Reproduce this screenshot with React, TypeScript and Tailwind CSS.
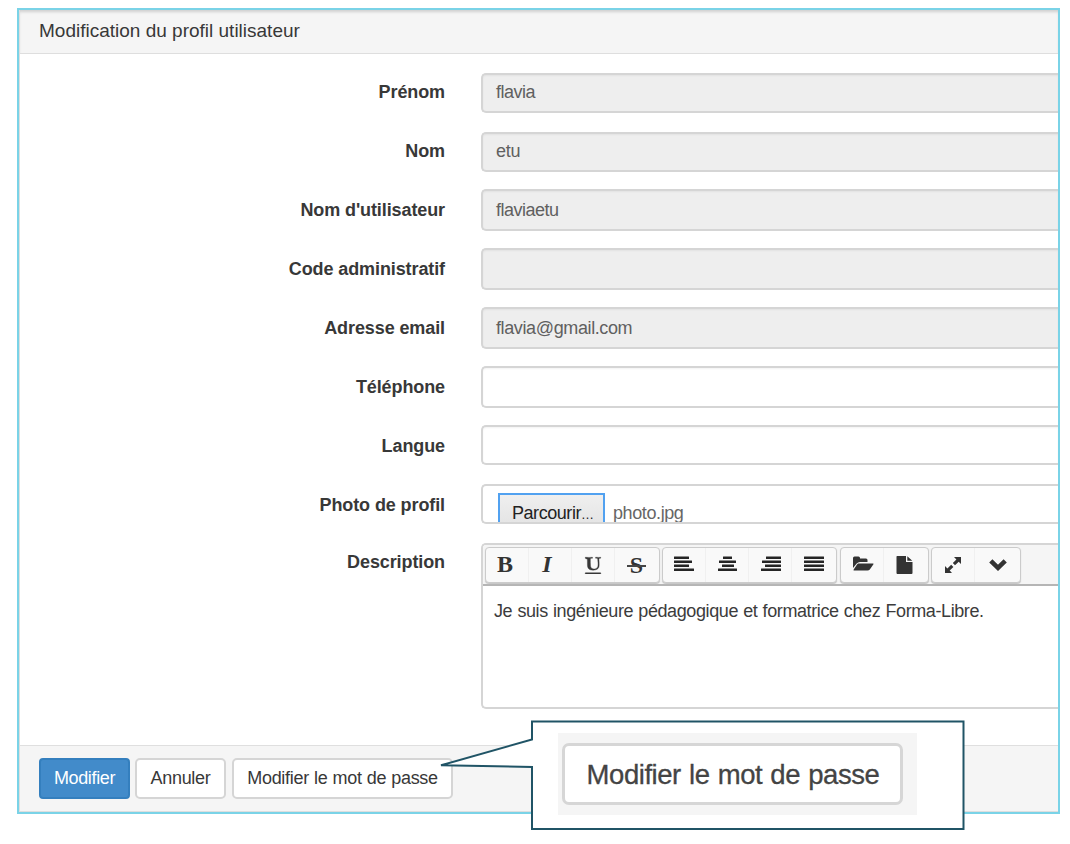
import React from 'react';

type Field = { label: string; value?: string; disabled?: boolean; gap: string; height: string; labelPad: string; spacing?: string };

const fields: Field[] = [
  { label: 'Prénom', value: 'flavia', disabled: true, gap: 'mt-[19px]', height: 'h-[40px]', labelPad: 'pt-[8px]', spacing: 'pt-[6px] tracking-[-0.5px]' },
  { label: 'Nom', value: 'etu', disabled: true, gap: 'mt-[19px]', height: 'h-[40px]', labelPad: 'pt-[8px]', spacing: 'pt-[6px] tracking-[-0.2px]' },
  { label: "Nom d'utilisateur", value: 'flaviaetu', disabled: true, gap: 'mt-[17px]', height: 'h-[42px]', labelPad: 'pt-[10px]', spacing: 'pt-[8px] tracking-[-0.5px]' },
  { label: 'Code administratif', disabled: true, gap: 'mt-[17px]', height: 'h-[42px]', labelPad: 'pt-[10px]' },
  { label: 'Adresse email', value: 'flavia@gmail.com', disabled: true, gap: 'mt-[17px]', height: 'h-[42px]', labelPad: 'pt-[10px]', spacing: 'pt-[8px] tracking-[-0.38px]' },
  { label: 'Téléphone', gap: 'mt-[17px]', height: 'h-[42px]', labelPad: 'pt-[10px]' },
  { label: 'Langue', gap: 'mt-[17px]', height: 'h-[40px]', labelPad: 'pt-[10px]' },
];

const fieldBorder = 'rounded-l-[5px] border-2 border-r-0 border-[#d5d5d5]';

function Label({ children, className }: { children: React.ReactNode; className: string }) {
  return (
    <div className={`mr-[36px] w-[425px] shrink-0 whitespace-nowrap text-right text-[18px] leading-[22px] font-bold tracking-[-0.1px] text-[#383838] ${className}`}>
      {children}
    </div>
  );
}

function Lines({ rows }: { rows: number[][] }) {
  return (
    <svg width="20" height="16" viewBox="0 0 20 16" fill="#252525" className="relative -top-px">
      {rows.map(([x, w], i) => (
        <rect key={i} x={x} y={i * 4 + 0.5} width={w} height="2.6" rx="0.3" />
      ))}
    </svg>
  );
}

function ToolGroup({ children, className }: { children: React.ReactNode; className: string }) {
  return (
    <div className={`flex h-[36px] shrink-0 rounded-[4px] border border-[#cbcbcb] bg-[#f9f9f9] shadow-[0_1px_1px_#c4c4c4] ${className}`}>
      {children}
    </div>
  );
}

function Tool({ children, className = '' }: { children: React.ReactNode; className?: string }) {
  return (
    <div className={`flex w-[43px] items-center justify-center border-r border-[#f0f0f0] text-[#333] last:border-r-0 ${className}`}>
      {children}
    </div>
  );
}

const glyph = 'block font-["Liberation_Serif",serif] text-[24px] leading-[24px] font-bold';

export default function App() {
  return (
    <div className='relative h-[844px] w-[1070px] overflow-hidden bg-white pt-[8px] pl-[17px] font-["Liberation_Sans",Arial,sans-serif]'>
      <div className="flex h-[806px] w-[1043px] flex-col overflow-hidden border-2 border-[#7ad3e7] bg-white">
        <div className="flex min-h-0 flex-1 flex-col border-l border-b border-[#dedede]">
          <header className="h-[44px] shrink-0 border-b-[1.5px] border-[#dedede] bg-[#f5f5f5] pt-[10px] pl-[19px] text-[19px] leading-[22px] text-[#383838] shadow-[inset_0_3px_3px_-1px_#d0d0d0]">
            Modification du profil utilisateur
          </header>
          <main className="flex flex-1 flex-col">
            {fields.map((f) => (
              <div key={f.label} className={`flex ${f.gap} ${f.height}`}>
                <Label className={f.labelPad}>{f.label}</Label>
                <div
                  className={`flex-1 ${fieldBorder} ${f.disabled ? 'bg-[#eeeeee]' : 'bg-white'} pl-[13px] text-[18px] leading-[22px] text-[#606060] shadow-[inset_0_1px_2px_#0000000d] ${f.spacing ?? ''}`}
                >
                  {f.value}
                </div>
              </div>
            ))}
            <div className="mt-[19px] flex h-[40px]">
              <Label className="pt-[10px]">Photo de profil</Label>
              <div className={`flex flex-1 overflow-hidden ${fieldBorder} bg-white pl-[15px]`}>
                <div className="mt-[7px] h-[40px] w-[107px] shrink-0 border-2 border-[#51a1f0] bg-linear-to-b from-[#efefef] to-[#e2e2e2] pt-[7px] pl-[12px] text-[18px] leading-[22px] tracking-[-0.45px] whitespace-nowrap text-[#222]">
                  Parcourir<span className="text-[13px]">…</span>
                </div>
                <div className="pt-[16px] pl-[8px] text-[18px] leading-[22px] tracking-[-0.4px] text-[#666]">photo.jpg</div>
              </div>
            </div>
            <div className="mt-[19px] flex h-[166px]">
              <Label className="pt-[8px]">Description</Label>
              <div className={`flex flex-1 flex-col overflow-hidden ${fieldBorder} bg-white`}>
                <div className="flex h-[41px] shrink-0 border-b-2 border-[#b5b5b5] bg-[#f5f5f5] pt-[2px] pl-[2px]">
                  <ToolGroup className="w-[175px]">
                    <Tool className="pr-[4px] pb-[2px]"><span className={glyph}>B</span></Tool>
                    <Tool className="pr-[6px] pb-[2px]"><span className={`${glyph} italic`}>I</span></Tool>
                    <Tool>
                      <svg width="18" height="18" viewBox="0 0 1792 1792" fill="#383838" stroke="#383838" strokeWidth="40">
                        <path d="M176 223q-37-2-45-4l-3-88q13-1 40-1 60 0 112 4 132 7 166 7 86 0 168-3 116-4 146-5 56 0 86-2l-1 14 2 64v9q-60 9-124 9-60 0-79 25-13 14-13 132 0 13 .5 32.5t.5 25.5l1 229 14 280q6 124 51 202 35 59 96 92 88 47 177 47 104 0 191-28 56-18 99-51 48-36 65-64 36-56 53-114 21-73 21-229 0-79-3.5-128t-11-122.5-13.5-159.5l-4-59q-5-67-24-88-34-35-77-34l-100 2-14-3 2-86h84l205 10q76 3 196-10l18 2q6 38 6 51 0 7-4 31-45 12-84 13-73 11-79 17-15 15-15 41 0 7 1.500 27t1.500 31q8 19 22 396 6 195-15 304-15 76-41 122-38 65-112 123-75 57-182 89-109 33-255 33-167 0-284-46-119-47-179-122-61-76-83-195-16-80-16-237V524q0-188-17-213-25-36-147-39zM1664 1760v-64q0-14-9-23t-23-9H160q-14 0-23 9t-9 23v64q0 14 9 23t23 9h1472q14 0 23-9t9-23z" />
                      </svg>
                    </Tool>
                    <Tool className="pb-[1px]">
                      <span className="relative">
                        <span className={`${glyph}`}>S</span>
                        <span className="absolute top-[12px] left-[-3px] h-[2px] w-[19px] bg-[#454545]" />
                      </span>
                    </Tool>
                  </ToolGroup>
                  <ToolGroup className="ml-[2px] w-[175px]">
                    <Tool><Lines rows={[[0, 15], [0, 18], [0, 15], [0, 20]]} /></Tool>
                    <Tool className="pl-[2px]"><Lines rows={[[5, 9], [1, 17], [4, 12], [0, 19]]} /></Tool>
                    <Tool className="pl-[2px]"><Lines rows={[[5, 15], [1, 19], [4, 16], [0, 20]]} /></Tool>
                    <Tool className="pl-[1px]"><Lines rows={[[0, 20], [0, 20], [0, 20], [0, 20]]} /></Tool>
                  </ToolGroup>
                  <ToolGroup className="ml-[3px] w-[89px]">
                    <Tool className="pl-[2px] pb-[2px]">
                      <svg width="21" height="16" viewBox="0 0 21 16" fill="#333">
                        <path d="M0 12V2Q0 .5 1.500 .5H5.500Q7 .5 7 2V2.500H13Q14.500 2.500 14.500 4V6H7Q5 6 3.700 7.500ZM5 7.500H20Q21 7.500 20.300 8.500L16.800 13.500Q16 14.500 14.500 14.500H1Q0 14.500 .7 13.500L4 8.500Z" />
                      </svg>
                    </Tool>
                    <Tool className="pr-[3px] pb-[1px]">
                      <svg width="17" height="20" viewBox="0 0 17 20" fill="#333">
                        <path d="M1 1H10V7H16.500V18Q16.500 19 15.500 19H1.500Q.5 19 .5 18V1.500ZM11.300 1.200L16.300 5.800H11.300Z" />
                      </svg>
                    </Tool>
                  </ToolGroup>
                  <ToolGroup className="ml-[2px] w-[90px]">
                    <Tool className="pb-[1px]">
                      <svg width="18" height="18" viewBox="0 0 18 18" fill="#333">
                        <path d="M10 1H17V8L14.700 5.700L11 9.300L8.800 7.100L12.400 3.400ZM7.200 8.700L9.400 10.900L5.700 14.600L8 17H1V10L3.400 12.400Z" />
                      </svg>
                    </Tool>
                    <Tool className="pl-[2px]">
                      <svg width="18" height="12" viewBox="0 0 18 12" fill="none" stroke="#333" strokeWidth="4.600">
                        <path d="M1.800 1.800L9 8.800L16.200 1.800" />
                      </svg>
                    </Tool>
                  </ToolGroup>
                </div>
                <div className="pt-[14px] pl-[11px] text-[18px] leading-[22px] tracking-[-0.4px] [word-spacing:0.6px] whitespace-nowrap text-[#3c3c3c]">
                  Je suis ingénieure pédagogique et formatrice chez Forma-Libre.
                </div>
              </div>
            </div>
          </main>
          <footer className="flex h-[66px] shrink-0 border-t-[1.5px] border-[#dfdfdf] bg-[#f5f5f5] pt-[12px] pl-[19px] text-[18px] leading-[22px] whitespace-nowrap text-[#383838]">
            <button className="flex h-[41px] w-[91px] justify-center rounded-[4px] border-2 border-[#347fbe] bg-[#428bca] pt-[7px] tracking-[-0.35px] text-white">Modifier</button>
            <button className="ml-[5px] flex h-[41px] w-[91px] justify-center rounded-[5px] border-2 border-[#d5d5d5] bg-white pt-[7px] tracking-[-0.3px]">Annuler</button>
            <button className="ml-[6px] flex h-[41px] w-[221px] justify-center rounded-[5px] border-2 border-[#d5d5d5] bg-white pt-[7px] tracking-[-0.3px] [word-spacing:0.4px]">Modifier le mot de passe</button>
          </footer>
        </div>
      </div>
      <div className="absolute top-[720px] left-[438px] h-[111px] w-[528px]">
        <svg className="absolute inset-0" width="528" height="111" viewBox="0 0 528 111">
          <path d="M94 1.500H525.500V109H94V47L3 45.300L94 19.500Z" fill="white" stroke="#205466" strokeWidth="2" />
        </svg>
        <div className="relative mt-[13px] ml-[120px] flex h-[82px] w-[359px] bg-[#f5f5f5] pt-[10px] pl-[4px]">
          <div className="flex h-[62px] w-[341px] justify-center rounded-[7px] border-[3px] border-[#d6d6d6] bg-white pt-[13px] pl-[1px] text-[27.5px] leading-[32px] tracking-[-0.45px] [word-spacing:1px] whitespace-nowrap text-[#444] [-webkit-text-stroke:0.3px_#444]">
            Modifier le mot de passe
          </div>
        </div>
      </div>
    </div>
  );
}
